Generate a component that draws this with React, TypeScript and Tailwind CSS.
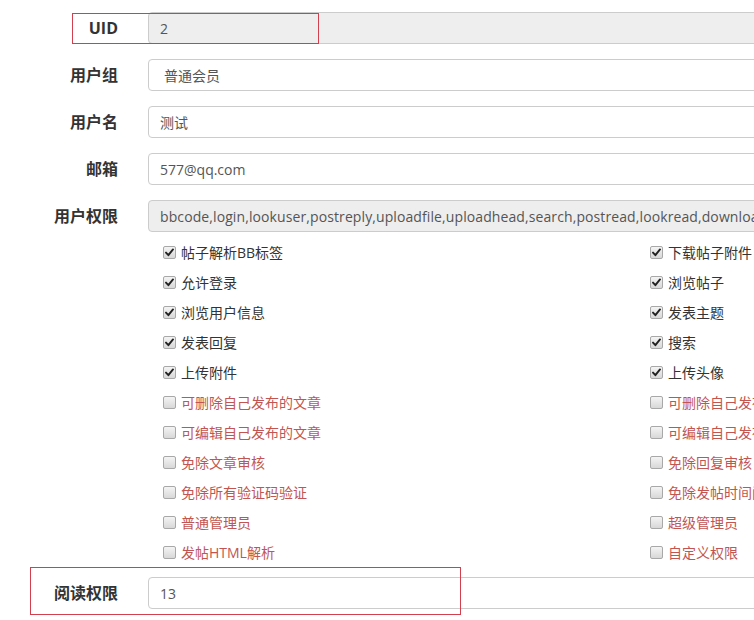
import React from "react";

const font = { fontFamily: '"Open Sans", "Noto Sans CJK SC", sans-serif' };

function Box({ checked }: { checked: boolean }) {
  return (
    <span className="relative inline-flex h-[13px] w-[13px] shrink-0 items-center justify-center rounded-[2px] border border-[#a8a8a8] bg-gradient-to-b from-[#f4f4f4] to-[#d8d8d8]">
      {checked && (
        <svg width="9" height="9" viewBox="0 0 9 9">
          <path d="M1 4.6 L3.4 7.2 L8 1.4" fill="none" stroke="#222" strokeWidth="1.9" strokeLinecap="round" strokeLinejoin="round" />
        </svg>
      )}
    </span>
  );
}

function Check({ label, checked }: { label: string; checked: boolean }) {
  return (
    <div className="flex h-[30px] items-center gap-[5px] whitespace-nowrap">
      <Box checked={checked} />
      <span className={`text-[14px] ${checked ? "text-[#333]" : "text-[#c25552]"}`}>{label}</span>
    </div>
  );
}

function Row({
  label,
  value,
  readOnly,
  extraPad,
  wide,
  className,
}: {
  label: string;
  value: string;
  readOnly?: boolean;
  extraPad?: boolean;
  wide?: boolean;
  className?: string;
}) {
  return (
    <div className={`flex items-center ${className ?? ""}`}>
      <div className="w-[148px] shrink-0 pr-[30px] text-right text-[16px] font-bold text-[#333]">{label}</div>
      <div
        className={`flex h-[32px] w-[900px] shrink-0 items-center rounded-[4px] border border-[#ccc] ${
          readOnly ? "bg-[#eee]" : "bg-white"
        } ${extraPad ? "pl-[15px]" : "pl-[11px]"} ${wide ? "tracking-[0.1px]" : ""} whitespace-nowrap text-[14px] text-[#555]`}
      >
        {value}
      </div>
    </div>
  );
}

const left: [string, boolean][] = [
  ["帖子解析BB标签", true],
  ["允许登录", true],
  ["浏览用户信息", true],
  ["发表回复", true],
  ["上传附件", true],
  ["可删除自己发布的文章", false],
  ["可编辑自己发布的文章", false],
  ["免除文章审核", false],
  ["免除所有验证码验证", false],
  ["普通管理员", false],
  ["发帖HTML解析", false],
];

const right: [string, boolean][] = [
  ["下载帖子附件", true],
  ["浏览帖子", true],
  ["发表主题", true],
  ["搜索", true],
  ["上传头像", true],
  ["可删除自己发布的回复", false],
  ["可编辑自己发布的回复", false],
  ["免除回复审核", false],
  ["免除发帖时间间隔", false],
  ["超级管理员", false],
  ["自定义权限", false],
];

export default function App() {
  return (
    <div className="relative h-[620px] w-[754px] overflow-hidden bg-white" style={font}>
      <div className="flex flex-col pt-[12px]">
        <div className="relative">
          <Row label="UID" value="2" readOnly className="mb-[15px]" />
          <div className="pointer-events-none absolute left-[72px] top-[1px] h-[31px] w-[247px] border border-[#d23f4f]" />
        </div>
        <Row label="用户组" value="普通会员" extraPad className="mb-[15px]" />
        <Row label="用户名" value="测试" className="mb-[15px]" />
        <Row label="邮箱" value="577@qq.com" className="mb-[15px]" />
        <Row
          label="用户权限"
          value="bbcode,login,lookuser,postreply,uploadfile,uploadhead,search,postread,lookread,download"
          readOnly
          wide
        />
        <div className="mt-[5px] flex pl-[163px]">
          <div className="w-[487px] shrink-0">
            {left.map(([l, c]) => (
              <Check key={l} label={l} checked={c} />
            ))}
          </div>
          <div className="shrink-0">
            {right.map(([l, c]) => (
              <Check key={l} label={l} checked={c} />
            ))}
          </div>
        </div>
        <div className="relative mt-[10px]">
          <Row label="阅读权限" value="13" />
          <div className="pointer-events-none absolute left-[30px] top-[-10px] h-[48px] w-[431px] border border-[#d23f4f]" />
        </div>
      </div>
    </div>
  );
}
